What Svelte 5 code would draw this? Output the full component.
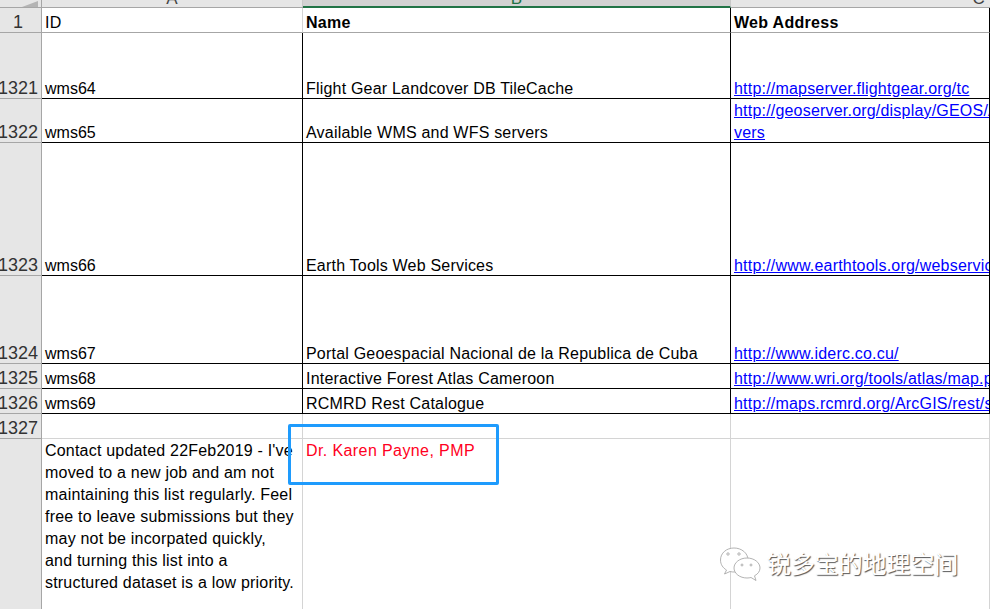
<script>
	const rows = [
		{ num: '1321', h: 66, id: 'wms64', name: 'Flight Gear Landcover DB TileCache', url: ['http://mapserver.flightgear.org/tc'] },
		{ num: '1322', h: 44, id: 'wms65', name: 'Available WMS and WFS servers', url: ['http://geoserver.org/display/GEOS/Available_WMS_and_WFS_ser', 'vers'] },
		{ num: '1323', h: 133, id: 'wms66', name: 'Earth Tools Web Services', url: ['http://www.earthtools.org/webservices.htm'] },
		{ num: '1324', h: 88, id: 'wms67', name: 'Portal Geoespacial Nacional de la Republica de Cuba', url: ['http://www.iderc.co.cu/'] },
		{ num: '1325', h: 25, id: 'wms68', name: 'Interactive Forest Atlas Cameroon', url: ['http://www.wri.org/tools/atlas/map.php'] },
		{ num: '1326', h: 25, id: 'wms69', name: 'RCMRD Rest Catalogue', url: ['http://maps.rcmrd.org/ArcGIS/rest/services'] }
	];
	const note = [
		"Contact updated 22Feb2019 - I've",
		'moved to a new job and am not',
		'maintaining this list regularly. Feel',
		'free to leave submissions but they',
		'may not be incorpated quickly,',
		'and turning this list into a',
		'structured dataset is a low priority.'
	];
</script>

<div class="sheet">
	<div class="row colhead">
		<div class="corner"><span class="tri"></span></div>
		<div class="col"><span>A</span></div>
		<div class="col sel"><span>B</span></div>
		<div class="col end"><span>C</span></div>
	</div>

	<div class="row head" style="height: 25px">
		<div class="num">1</div>
		<div class="cell">ID</div>
		<div class="cell bold dark">Name</div>
		<div class="cell bold dark">Web Address</div>
	</div>

	{#each rows as r}
		<div class="row black" style="height: {r.h}px">
			<div class="num">{r.num}</div>
			<div class="cell id">{r.id}</div>
			<div class="cell dark">{r.name}</div>
			<div class="cell dark link">
				{#each r.url as line}
					<a href="#top">{line}</a>
				{/each}
			</div>
		</div>
	{/each}

	<div class="row blank" style="height: 25px">
		<div class="num">1327</div>
		<div class="cell"></div>
		<div class="cell dark"></div>
		<div class="cell"></div>
	</div>

	<div class="row last">
		<div class="num"></div>
		<div class="cell top">
			{#each note as line}
				<div>{line}</div>
			{/each}
		</div>
		<div class="cell top red">Dr. Karen Payne, PMP</div>
		<div class="cell"></div>
	</div>

	<div class="callout"></div>

	<div class="mark">
		<svg width="41" height="36" viewBox="0 0 41 36" fill="#fff" stroke="#a0a0a0" stroke-width="0.8">
			<path d="M14 1C6.500 1 .5 6 .5 13C.5 17.500 3 21 6.500 23L4.500 27L10 24.500C11.500 25 13 25 14.500 25C22 25 28 19.500 28 13C28 6 21.500 1 14 1Z" />
			<path d="M27 11C19.800 11 14 15.500 14 21C14 26.500 19.800 31 27 31C28.500 31 29.800 30.800 31 30.500L36 33.500L34.500 28.800C38 27 40 24.200 40 21C40 15.500 34.200 11 27 11Z" />
			<circle cx="8" cy="7" r="1.200" />
			<circle cx="19" cy="7" r="1.200" />
			<circle cx="22" cy="18" r="1" />
			<circle cx="31" cy="18" r="1" />
		</svg>
		<span>锐多宝的地理空间</span>
	</div>
</div>

<style>
	:global(body) {
		margin: 0;
		background: #fff;
	}

	.sheet {
		position: relative;
		width: 990px;
		height: 609px;
		overflow: hidden;
		font-family: 'Liberation Sans', Arial, sans-serif;
		font-size: 16px;
		letter-spacing: 0.2px;
		color: #000;
	}

	.row {
		display: grid;
		grid-template-columns: 42px 261px 428px 259px;
		box-sizing: border-box;
	}

	.colhead {
		height: 8px;
		background: #e6e6e6;
		border-bottom: 1px solid #a6a6a6;
	}

	.corner {
		position: relative;
		border-right: 1px solid #a6a6a6;
		overflow: hidden;
	}

	.tri {
		position: absolute;
		right: 3px;
		bottom: 1px;
		width: 0;
		height: 0;
		border-left: 16px solid transparent;
		border-bottom: 6px solid #b4b4b4;
	}

	.col {
		display: flex;
		justify-content: center;
		align-items: flex-start;
		height: 7px;
		overflow: hidden;
		color: #444;
		border-right: 1px solid #c8c8c8;
	}

	.col span {
		display: block;
		line-height: 16px;
		margin-top: -9px;
		font-size: 17px;
	}

	.end {
		justify-content: flex-end;
		padding-right: 5px;
		border-right: 0;
	}

	.sel {
		background: #d2d2d2;
		border-bottom: 2px solid #217346;
		height: 8px;
		box-sizing: border-box;
		color: #217346;
	}

	.num {
		display: flex;
		align-items: flex-end;
		justify-content: flex-end;
		padding-right: 3px;
		padding-bottom: 1px;
		line-height: 18px;
		font-size: 18px;
		letter-spacing: 0;
		color: #333;
		background: #e6e6e6;
		border-right: 1px solid #a6a6a6;
		border-bottom: 1px solid #a6a6a6;
		white-space: nowrap;
		overflow: hidden;
	}

	.head .num {
		justify-content: center;
		padding-right: 5px;
	}

	.cell {
		box-sizing: border-box;
		padding: 0 3px;
		display: flex;
		flex-direction: column;
		justify-content: flex-end;
		gap: 4px;
		line-height: 18px;
		white-space: nowrap;
		overflow: hidden;
		border-right: 1px solid #d4d4d4;
		border-bottom: 1px solid #d4d4d4;
	}

	.id {
		letter-spacing: 0;
	}

	.dark {
		border-right-color: #000;
	}

	.head .cell {
		border-bottom-color: #a6a6a6;
	}

	.black .cell {
		border-right-color: #000;
		border-bottom-color: #000;
	}

	.black .num {
		border-bottom-color: #a6a6a6;
	}

	.blank .cell {
		border-right-color: #d4d4d4;
	}

	.bold {
		font-weight: 700;
		letter-spacing: 0.3px;
	}

	.link a {
		color: #0000ff;
		text-decoration: underline;
	}

	.top {
		justify-content: flex-start;
		padding-top: 3px;
		border-bottom: 0;
	}

	.last {
		height: 172px;
	}

	.last .num {
		border-bottom: 0;
	}

	.red {
		color: #ff0022;
		letter-spacing: 0.4px;
	}

	.callout {
		position: absolute;
		left: 288px;
		top: 424px;
		width: 205px;
		height: 55px;
		border: 3px solid #1e9bfd;
		border-radius: 2px;
	}

	.mark {
		position: absolute;
		left: 720px;
		top: 545px;
		display: flex;
		align-items: flex-start;
		gap: 6px;
		font-family: 'Noto Sans CJK SC', sans-serif;
		font-size: 24px;
		letter-spacing: -0.1px;
		line-height: 36px;
		color: #fff;
		text-shadow: 1px 1px 1px #555;
	}

	.mark svg {
		margin-top: 2px;
	}
</style>
